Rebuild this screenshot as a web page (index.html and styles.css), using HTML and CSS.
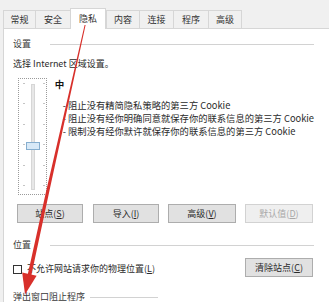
FILE: index.html
```html
<!DOCTYPE html>
<html lang="zh-CN">
<head>
<meta charset="utf-8">
<title>Internet 选项 - 隐私</title>
<link rel="stylesheet" href="styles.css">
</head>
<body>
<div class="dialog">
  <div class="tabs">
    <div class="tab w32">常规</div>
    <div class="tab w35">安全</div>
    <div class="tab active">隐私</div>
    <div class="tab w33">内容</div>
    <div class="tab w34">连接</div>
    <div class="tab w35">程序</div>
    <div class="tab w34 last">高级</div>
  </div>
  <div class="panel">
    <div class="group-title"><span>设置</span><i class="rule"></i></div>
    <div class="hint">选择 Internet 区域设置。</div>
    <div class="privacy">
      <div class="slider">
        <div class="ticks"><i></i><i></i><i></i><i></i><i></i><i></i></div>
        <div class="track"><div class="thumb"></div></div>
        <div class="ticks right"><i></i><i></i><i></i><i></i><i></i><i></i></div>
      </div>
      <div class="level">
        <div class="level-name">中</div>
        <ul class="rules">
          <li>- 阻止没有精简隐私策略的第三方 Cookie</li>
          <li>- 阻止没有经你明确同意就保存你的联系信息的第三方 Cookie</li>
          <li>- 限制没有经你默许就保存你的联系信息的第三方 Cookie</li>
        </ul>
      </div>
    </div>
    <div class="buttons">
      <button class="btn w66">站点(<u>S</u>)</button>
      <button class="btn w66 gap10">导入(<u>I</u>)</button>
      <button class="btn w68 gap9">高级(<u>V</u>)</button>
      <button class="btn w68 gap9 disabled">默认值(<u>D</u>)</button>
    </div>
    <div class="group-title sec2"><span>位置</span><i class="rule"></i></div>
    <div class="location">
      <span class="checkbox"></span>
      <span class="check-label">不允许网站请求你的物理位置(<u>L</u>)</span>
      <button class="btn w68 push">清除站点(<u>C</u>)</button>
    </div>
    <div class="group-title sec3"><span>弹出窗口阻止程序</span><i class="rule short"></i></div>
  </div>
</div>
<svg class="arrow" width="329" height="302" viewBox="0 0 329 302">
  <polygon points="84.6,25 85.6,25 49.6,190 31.2,276 27.4,276 46.4,190" fill="#d8302b"/>
  <polygon points="22.2,272.5 36.6,275.8 25,294.5" fill="#d8302b"/>
</svg>
</body>
</html>
```

FILE: styles.css
```css
html, body {
  margin: 0;
  padding: 0;
}
body {
  width: 329px;
  height: 302px;
  overflow: hidden;
  background: #f0f0f0;
  font-family: "Noto Sans CJK SC", "Noto Sans", sans-serif;
  font-size: 9px;
  color: #2a2a2a;
  position: relative;
}
.dialog {
  padding: 10px 0 0 3px;
}
.tabs {
  display: flex;
  align-items: flex-start;
  height: 18px;
}
.tab {
  box-sizing: border-box;
  height: 18px;
  line-height: 17px;
  text-align: center;
  border: 1px solid #d6d6d6;
  border-right: none;
  border-bottom: none;
  background: #f0f0f0;
  color: #333;
}
.tab.last { border-right: 1px solid #d6d6d6; }
.w32 { width: 32px; }
.w33 { width: 33px; }
.w34 { width: 34px; }
.w35 { width: 35px; }
.tab.active {
  width: 36px;
  height: 21px;
  margin-top: -2px;
  line-height: 20px;
  background: #fff;
  border-right: 1px solid #d6d6d6;
  position: relative;
  z-index: 1;
}
.panel {
  box-sizing: border-box;
  width: 327px;
  height: 274px;
  background: #fff;
  border: 1px solid #d6d6d6;
  border-bottom: none;
  padding: 9px 15px 0 9px;
}
.group-title {
  display: grid;
  grid-template-columns: minmax(32px, max-content) 1fr;
  column-gap: 5px;
  align-items: center;
  height: 12px;
  line-height: 12px;
  color: #3a3a3a;
}
.rule {
  display: block;
  height: 0;
  border-top: 1px solid #d2d2d2;
}
.rule.short {
  width: 68px;
  justify-self: start;
}
.hint {
  margin-top: 8px;
  line-height: 12px;
}
.privacy {
  display: flex;
  margin-top: 8px;
}
.slider {
  box-sizing: border-box;
  width: 37px;
  height: 117px;
  margin-left: 5px;
  border: 1px dotted #9a9a9a;
  display: flex;
  align-items: flex-start;
}
.ticks {
  width: 2px;
  height: 103px;
  margin: 4px 0 0 4px;
  display: flex;
  flex-direction: column;
  justify-content: space-between;
}
.ticks.right {
  margin-left: 8px;
}
.ticks i {
  display: block;
  width: 2px;
  height: 1px;
  background: #c4c4c4;
}
.track {
  box-sizing: border-box;
  position: relative;
  width: 4px;
  height: 106px;
  margin: 5px 0 0 6px;
  background: #e7e7e7;
  border: 1px solid #d6d6d6;
}
.thumb {
  box-sizing: border-box;
  position: absolute;
  left: -6px;
  top: 57px;
  width: 14px;
  height: 8px;
  background: #d8e9f7;
  border: 1px solid #86aecf;
}
.level {
  margin-left: 8px;
}
.level-name {
  font-weight: bold;
  font-size: 9.5px;
  line-height: 12px;
  color: #111;
}
.rules {
  list-style: none;
  margin: 8.5px 0 0 8px;
  padding: 0;
  font-size: 9.3px;
}
.rules li {
  line-height: 13px;
  white-space: nowrap;
}
.buttons {
  display: flex;
  margin: 9px 0 0 4px;
}
.btn {
  box-sizing: border-box;
  height: 19px;
  padding: 0;
  font-family: inherit;
  font-size: 9px;
  line-height: 17px;
  color: #2a2a2a;
  background: #e1e1e1;
  border: 1px solid #adadad;
  border-radius: 0;
}
.btn u { text-decoration: underline; }
.w66 { width: 66px; }
.w68 { width: 68px; }
.gap9 { margin-left: 9px; }
.gap10 { margin-left: 10px; }
.btn.disabled {
  color: #a8a8a8;
  background: #efefef;
  border-color: #d2d2d2;
}
.sec2 { margin-top: 16px; }
.location {
  display: flex;
  align-items: center;
  height: 19px;
  margin-top: 7px;
}
.checkbox {
  box-sizing: border-box;
  width: 9px;
  height: 9px;
  margin-top: 3px;
  border: 1px solid #333;
  background: #fff;
  margin-right: 5px;
}
.check-label {
  line-height: 12px;
  margin-top: 3px;
}
.btn.push {
  margin-left: auto;
  margin-right: 1px;
}
.sec3 { margin-top: 14px; }
.arrow {
  position: absolute;
  left: 0;
  top: 0;
  pointer-events: none;
  z-index: 5;
}
```
